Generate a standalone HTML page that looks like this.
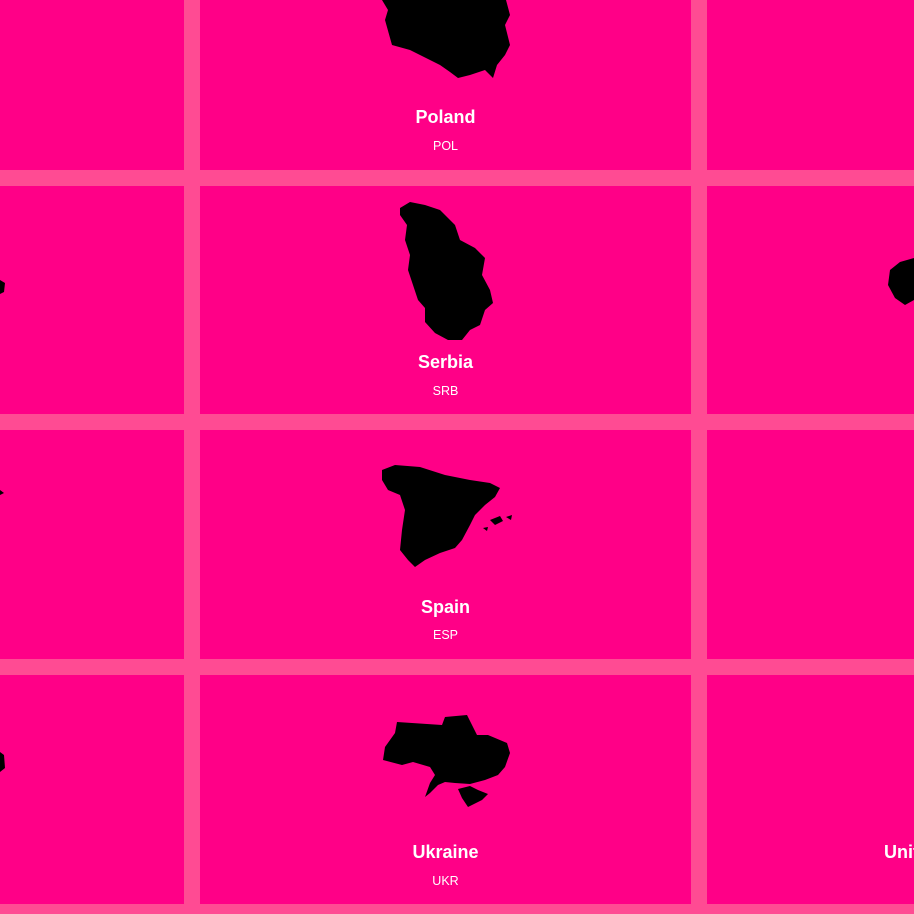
<!DOCTYPE html>
<html><head><style>
body{margin:0;width:914px;height:914px;overflow:hidden;background:#ff4b93;position:relative;font-family:"Liberation Sans",sans-serif}
.c{position:absolute;background:#ff0087}
.t{position:absolute;width:491px;text-align:center;color:#fff;font-weight:bold;font-size:18px}
.s{position:absolute;width:491px;text-align:center;color:#fff;font-size:12.5px}
svg{position:absolute;left:0;top:0}
</style></head><body>
<div class="c" style="left:0;top:0;width:184px;height:170px"></div>
<div class="c" style="left:200px;top:0;width:491px;height:170px"></div>
<div class="c" style="left:707px;top:0;width:207px;height:170px"></div>
<div class="c" style="left:0;top:186px;width:184px;height:228px"></div>
<div class="c" style="left:200px;top:186px;width:491px;height:228px"></div>
<div class="c" style="left:707px;top:186px;width:207px;height:228px"></div>
<div class="c" style="left:0;top:430px;width:184px;height:229px"></div>
<div class="c" style="left:200px;top:430px;width:491px;height:229px"></div>
<div class="c" style="left:707px;top:430px;width:207px;height:229px"></div>
<div class="c" style="left:0;top:675px;width:184px;height:229px"></div>
<div class="c" style="left:200px;top:675px;width:491px;height:229px"></div>
<div class="c" style="left:707px;top:675px;width:207px;height:229px"></div>
<svg width="914" height="914">
<polygon fill="#000" points="382,0 388,10 385,20 392,45 410,50 420,55 440,65 450,72 458,78 470,75 485,70 493,78 497,65 505,55 510,45 505,25 510,15 506,0"/>
<polygon fill="#000" points="400,208 410,202 425,205 440,210 455,225 460,240 475,248 485,258 482,275 490,290 493,303 485,310 480,325 470,330 462,340 448,340 435,333 425,322 425,308 418,300 413,285 408,270 410,255 405,240 407,225 400,215"/>
<polygon fill="#000" points="382,470 395,465 420,467 445,475 470,480 490,483 500,488 495,497 485,505 475,515 470,525 462,540 455,548 440,553 425,560 415,567 408,560 400,550 402,530 405,510 400,495 388,490 382,480"/>
<polygon fill="#000" points="490,520 500,516 503,521 495,525"/><polygon fill="#000" points="506,517 512,515 511,520"/><polygon fill="#000" points="483,528 488,527 487,531"/>
<polygon fill="#000" points="397,722 442,725 445,717 467,715 477,735 488,735 507,743 510,753 505,767 498,775 485,780 470,784 455,783 445,782 438,785 430,793 425,797 430,783 435,775 430,767 413,762 402,765 383,760 385,747 395,733"/>
<polygon fill="#000" points="458,789 470,786 478,790 488,794 482,800 468,807 462,798"/>
<polygon fill="#000" points="914,258 900,262 890,270 888,285 895,298 905,305 914,300"/>
<polygon fill="#000" points="0,280 5,283 4,292 0,294"/>
<polygon fill="#000" points="0,490 4,493 0,495"/>
<polygon fill="#000" points="0,752 4,755 5,768 0,772"/>
</svg>
<div class="t" style="left:200px;top:107px">Poland</div><div class="s" style="left:200px;top:139px">POL</div>
<div class="t" style="left:200px;top:352px">Serbia</div><div class="s" style="left:200px;top:384px">SRB</div>
<div class="t" style="left:200px;top:597px">Spain</div><div class="s" style="left:200px;top:628px">ESP</div>
<div class="t" style="left:200px;top:842px">Ukraine</div><div class="s" style="left:200px;top:874px">UKR</div>
<div class="t" style="left:884px;top:842px;width:60px;text-align:left">United</div>
</body></html>
